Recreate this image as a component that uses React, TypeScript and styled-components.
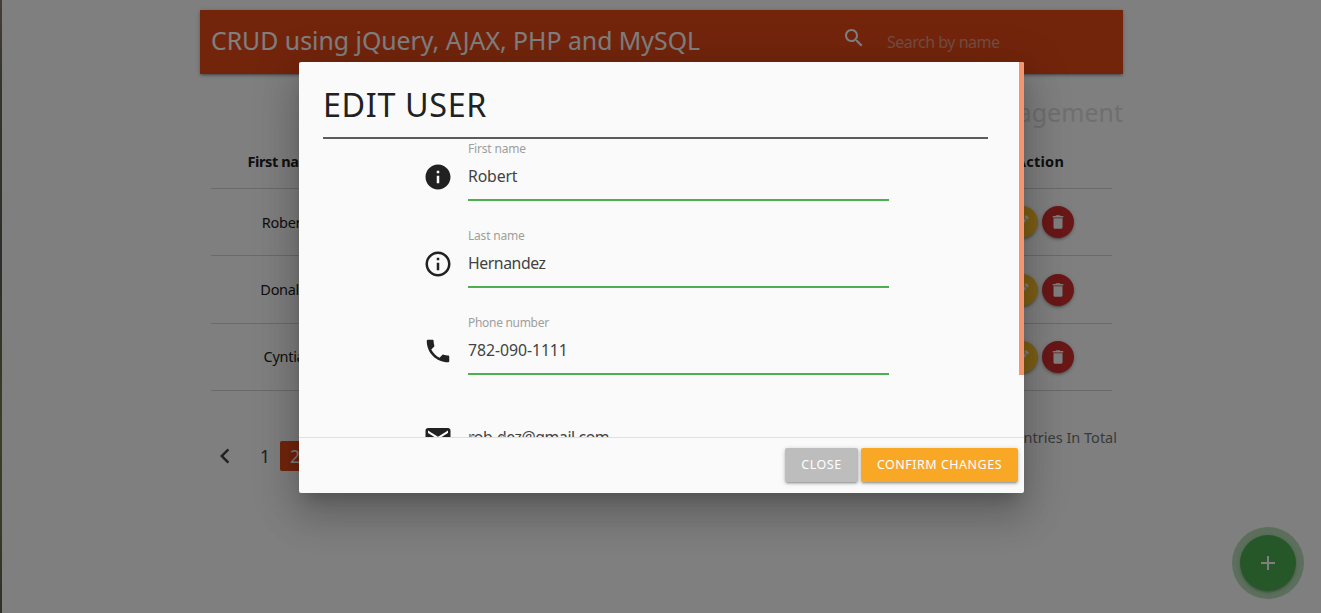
import React from "react";
import styled, { createGlobalStyle } from "styled-components";

const Global = createGlobalStyle`
  * { box-sizing: border-box; }
  html, body { margin: 0; height: 100%; overflow: hidden; background: #fff; }
  body { font-family: "Noto Sans", "Open Sans", sans-serif; font-size: 15px; color: #212121; }
`;

const depth1 = "0 2px 2px 0 rgba(0,0,0,.14), 0 3px 1px -2px rgba(0,0,0,.12), 0 1px 5px 0 rgba(0,0,0,.2)";

const Page = styled.div`
  width: 1321px;
  height: 613px;
  overflow: hidden;
  position: relative;
  padding-left: 2px;
  background: linear-gradient(#8a7e6c, #68665a 15%, #5c5c54 45%, #7c7c4c 70%, #74754f 85%, #62604e) 0 0 / 2px 100% no-repeat;
`;
const Container = styled.div`
  width: 923px;
  margin: 0 198px;
  padding-top: 10px;
`;
const Nav = styled.nav`
  height: 64px;
  display: flex;
  align-items: center;
  background: #e64a19;
  color: #fff;
  padding-left: 11px;
  box-shadow: ${depth1};
`;
const Brand = styled.span`
  width: 631px;
  font-size: 24.8px;
  letter-spacing: 0.01px;
  line-height: 60px;
  white-space: nowrap;
  padding-bottom: 4px;
`;
const SearchIcon = styled.svg`
  width: 24px;
  height: 24px;
  margin-bottom: 8px;
  fill: #fff;
`;
const Placeholder = styled.span`
  margin-left: 21px;
  font-size: 16px;
  letter-spacing: -0.5px;
  color: #e59a83;
`;
const Subtitle = styled.h2`
  margin: 0;
  height: 61px;
  padding-top: 21px;
  text-align: right;
  font-size: 24.8px;
  font-weight: 400;
  line-height: 34px;
  letter-spacing: 0.1px;
  color: #dedede;
`;
const Table = styled.div`
  margin: 0 11px;
`;
const Row = styled.div<{ $h: number }>`
  height: ${(p) => p.$h}px;
  display: flex;
  align-items: center;
  justify-content: space-between;
  border-bottom: 1px solid #d4d4d4;
`;
const Cell = styled.div<{ $bold?: boolean; $w: number; $tracking?: number; $lift?: number }>`
  width: ${(p) => p.$w}px;
  padding-bottom: ${(p) => p.$lift ?? 0}px;
  display: flex;
  justify-content: center;
  gap: 4px;
  font-size: 14.5px;
  font-weight: ${(p) => (p.$bold ? 700 : 400)};
  letter-spacing: ${(p) => p.$tracking ?? 0}px;
`;
const Round = styled.button<{ $color: string }>`
  width: 32px;
  height: 32px;
  padding: 0;
  border: 0;
  border-radius: 50%;
  display: grid;
  place-items: center;
  background: ${(p) => p.$color};
  box-shadow: ${depth1};
  svg { width: 18px; height: 18px; fill: #fff; }
`;
const Bottom = styled.div`
  display: flex;
  justify-content: space-between;
  padding: 35px 6px 0 10px;
`;
const Pager = styled.div`
  display: flex;
  align-items: center;
  margin-top: 15px;
  height: 30px;
  font-size: 17.5px;
`;
const PageItem = styled.span<{ $active?: boolean }>`
  width: 30px;
  height: 30px;
  line-height: 30px;
  text-align: center;
  border-radius: 2px;
  color: ${(p) => (p.$active ? "#fff" : "#444")};
  background: ${(p) => (p.$active ? "#e64a19" : "transparent")};
  svg { display: block; margin: 0 auto; width: 30px; height: 30px; fill: #444; }
`;
const Gap = styled.span`
  width: 10px;
`;
const Total = styled.span`
  font-size: 14.5px;
  line-height: 22px;
  color: #757575;
`;
const Fab = styled.button`
  position: absolute;
  left: 1240px;
  top: 535px;
  width: 56px;
  height: 56px;
  padding: 0;
  border: 0;
  border-radius: 50%;
  display: grid;
  place-items: center;
  background: #4caf50;
  box-shadow: 0 0 0 8px rgba(76,175,80,.4), ${depth1};
  svg { width: 24px; height: 24px; fill: #fff; }
`;
const Overlay = styled.div`
  position: absolute;
  inset: 0;
  background: rgba(0,0,0,.5);
`;
const Modal = styled.section`
  position: absolute;
  left: 299px;
  top: 62px;
  width: 725px;
  height: 431px;
  border-radius: 2px;
  overflow: hidden;
  display: flex;
  flex-direction: column;
  background: #fafafa;
  box-shadow: 0 24px 38px 3px rgba(0,0,0,.14), 0 9px 46px 8px rgba(0,0,0,.12), 0 11px 15px -7px rgba(0,0,0,.2);
`;
const Scroll = styled.div`
  position: relative;
  height: 375px;
  overflow: hidden;
  display: flex;
  justify-content: space-between;
  padding-left: 24px;
`;
const Body = styled.div`
  width: 665px;
`;
const Thumb = styled.div`
  width: 5px;
  height: 313px;
  background: #f4956e;
`;
const Title = styled.h1`
  margin: 0;
  height: 77px;
  padding-top: 20px;
  font-size: 32.3px;
  line-height: 45px;
  letter-spacing: 0.65px;
  font-weight: 400;
  border-bottom: 2px solid #5c5c5c;
`;
const Field = styled.div`
  height: 87px;
  padding-left: 101px;
  display: flex;
`;
const FieldIcon = styled.svg`
  width: 30px;
  height: 30px;
  margin: 23px 14px 0 -1px;
  fill: #212121;
`;
const Control = styled.div`
  width: 421px;
  height: 62px;
  margin-left: 1px;
  border-bottom: 2px solid #4caf50;
`;
const Label = styled.div<{ $tracking: number }>`
  height: 19px;
  font-size: 12px;
  line-height: 19px;
  letter-spacing: ${(p) => p.$tracking}px;
  color: #9e9e9e;
`;
const Value = styled.div<{ $tracking: number }>`
  height: 36px;
  font-size: 15.8px;
  line-height: 36px;
  letter-spacing: ${(p) => p.$tracking}px;
  white-space: nowrap;
  color: #424242;
`;
const Unraised = styled.span`
  position: absolute;
  margin-top: 4px;
  color: #9e9e9e;
  font-size: 15.8px;
`;
const Footer = styled.footer`
  height: 56px;
  padding: 0 6px 2px 0;
  display: flex;
  align-items: center;
  justify-content: flex-end;
  gap: 3px;
  border-top: 1px solid #e0e0e0;
`;
const Button = styled.button<{ $color: string; $w: number; $tracking: number }>`
  width: ${(p) => p.$w}px;
  height: 34px;
  padding: 0;
  border: 0;
  border-radius: 2px;
  font: 400 12.5px/34px "Noto Sans", sans-serif;
  letter-spacing: ${(p) => p.$tracking}px;
  color: #fff;
  background: ${(p) => p.$color};
  box-shadow: ${depth1};
`;

const ICON = {
  search: "M15.5 14h-.79l-.28-.27C15.41 12.59 16 11.11 16 9.5 16 5.91 13.09 3 9.5 3S3 5.91 3 9.5 5.91 16 9.5 16c1.61 0 3.09-.59 4.23-1.57l.27.28v.79l5 4.99L20.49 19l-4.99-5zm-6 0C7.01 14 5 11.99 5 9.5S7.01 5 9.5 5 14 7.01 14 9.5 11.99 14 9.5 14z",
  info: "M12 2C6.48 2 2 6.48 2 12s4.48 10 10 10 10-4.48 10-10S17.52 2 12 2zm1 15h-2v-6h2v6zm0-8h-2V7h2v2z",
  infoOutline: "M11 17h2v-6h-2v6zm1-15C6.48 2 2 6.48 2 12s4.48 10 10 10 10-4.48 10-10S17.52 2 12 2zm0 18c-4.41 0-8-3.59-8-8s3.59-8 8-8 8 3.59 8 8-3.59 8-8 8zM11 9h2V7h-2v2z",
  phone: "M6.62 10.79c1.44 2.83 3.76 5.14 6.59 6.59l2.2-2.2c.27-.27.67-.36 1.02-.24 1.12.37 2.33.57 3.57.57.55 0 1 .45 1 1V20c0 .55-.45 1-1 1-9.39 0-17-7.61-17-17 0-.55.45-1 1-1h3.5c.55 0 1 .45 1 1 0 1.25.2 2.45.57 3.57.11.35.03.74-.25 1.02l-2.2 2.2z",
  mail: "M20 4H4c-1.1 0-1.99.9-1.99 2L2 18c0 1.1.9 2 2 2h16c1.1 0 2-.9 2-2V6c0-1.1-.9-2-2-2zm0 4l-8 5-8-5V6l8 5 8-5v2z",
  edit: "M3 17.25V21h3.75L17.81 9.94l-3.75-3.75L3 17.25zM20.71 7.04c.39-.39.39-1.02 0-1.41l-2.34-2.34c-.39-.39-1.02-.39-1.41 0l-1.83 1.83 3.75 3.75 1.83-1.83z",
  trash: "M6 19c0 1.1.9 2 2 2h8c1.1 0 2-.9 2-2V7H6v12zM19 4h-3.5l-1-1h-5l-1 1H5v2h14V4z",
  left: "M15.41 7.41L14 6l-6 6 6 6 1.41-1.41L10.83 12z",
  add: "M19 13h-6v6h-2v-6H5v-2h6V5h2v6h6v2z",
};

const rows = [
  { name: "Robert", h: 67, lift: 0 },
  { name: "Donald", h: 68, lift: 2 },
  { name: "Cyntia", h: 67, lift: 2 },
];

const fields = [
  { icon: ICON.info, label: "First name", lt: -0.18, value: "Robert", vt: -0.15 },
  { icon: ICON.infoOutline, label: "Last name", lt: -0.2, value: "Hernandez", vt: -0.43 },
  { icon: ICON.phone, label: "Phone number", lt: -0.3, value: "782-090-1111", vt: -0.06 },
];

export default function App() {
  return (
    <Page>
      <Global />
      <Container>
        <Nav>
          <Brand>CRUD using jQuery, AJAX, PHP and MySQL</Brand>
          <SearchIcon viewBox="0 0 24 24"><path d={ICON.search} /></SearchIcon>
          <Placeholder>Search by name</Placeholder>
        </Nav>
        <Subtitle>Management</Subtitle>
        <Table>
          <Row $h={54}>
            <Cell $w={146} $bold $lift={2} $tracking={-0.4}>First name</Cell>
            <Cell $w={144} $bold $lift={2} $tracking={0.25}>Action</Cell>
          </Row>
          {rows.map((r) => (
            <Row key={r.name} $h={r.h}>
              <Cell $w={146} $lift={r.lift} $tracking={-0.3}>{r.name}</Cell>
              <Cell $w={144}>
                <Round $color="#fbc02d"><svg viewBox="0 0 24 24"><path d={ICON.edit} /></svg></Round>
                <Round $color="#d32f2f"><svg viewBox="0 0 24 24"><path d={ICON.trash} /></svg></Round>
              </Cell>
            </Row>
          ))}
        </Table>
        <Bottom>
          <Pager>
            <PageItem><svg viewBox="0 0 24 24"><path d={ICON.left} /></svg></PageItem>
            <Gap />
            <PageItem>1</PageItem>
            <PageItem $active>2</PageItem>
          </Pager>
          <Total>Entries In Total</Total>
        </Bottom>
      </Container>
      <Fab><svg viewBox="0 0 24 24"><path d={ICON.add} /></svg></Fab>
      <Overlay />
      <Modal>
        <Scroll>
          <Body>
            <Title>EDIT USER</Title>
            {fields.map((f) => (
              <Field key={f.label}>
                <FieldIcon viewBox="0 0 24 24"><path d={f.icon} /></FieldIcon>
                <Control>
                  <Label $tracking={f.lt}>{f.label}</Label>
                  <Value $tracking={f.vt}>{f.value}</Value>
                </Control>
              </Field>
            ))}
            <Field>
              <FieldIcon viewBox="0 0 24 24"><path d={ICON.mail} /></FieldIcon>
              <Control>
                <Label $tracking={0} />
                <Value $tracking={-0.42}><Unraised>Email</Unraised>rob-dez@gmail.com</Value>
              </Control>
            </Field>
          </Body>
          <Thumb />
        </Scroll>
        <Footer>
          <Button $color="#bdbdbd" $w={73} $tracking={0.5}>CLOSE</Button>
          <Button $color="#f9a825" $w={157} $tracking={0.5}>CONFIRM CHANGES</Button>
        </Footer>
      </Modal>
    </Page>
  );
}
